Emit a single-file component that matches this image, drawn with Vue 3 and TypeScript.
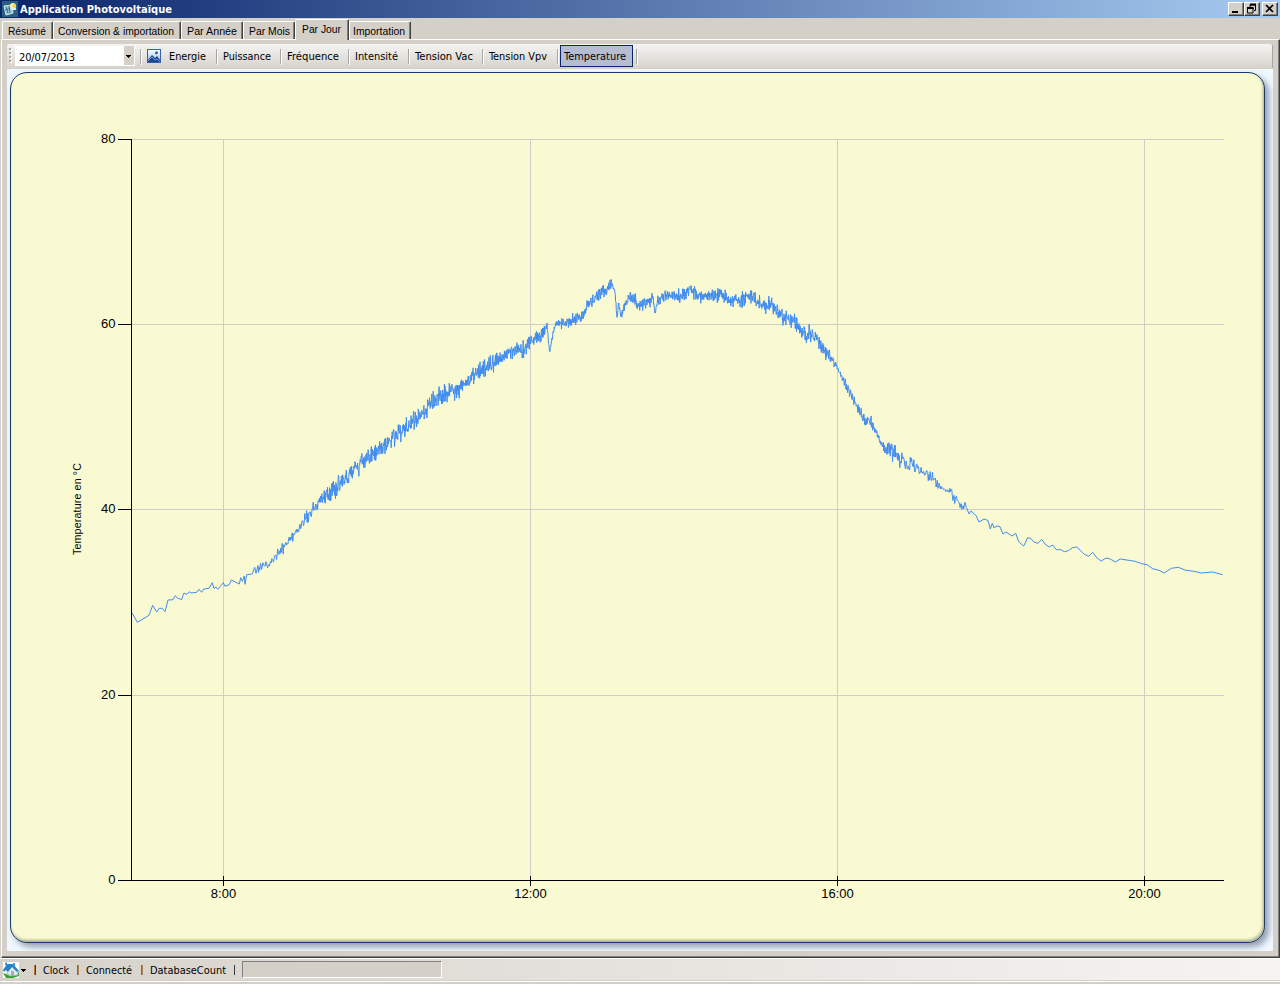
<script setup lang="ts">
interface Item { label: string; width: number; text: number; active?: boolean }

const tabs: Item[] = [
  { label: 'Résumé', width: 51, text: 38 },
  { label: 'Conversion & importation', width: 128, text: 116 },
  { label: 'Par Année', width: 62, text: 50 },
  { label: 'Par Mois', width: 52, text: 41 },
  { label: 'Par Jour', width: 54, text: 39, active: true },
  { label: 'Importation', width: 62, text: 52 },
]

const tools: Item[] = [
  { label: 'Energie', width: 76, text: 37 },
  { label: 'Puissance', width: 64, text: 48 },
  { label: 'Fréquence', width: 68, text: 52 },
  { label: 'Intensité', width: 60, text: 43 },
  { label: 'Tension Vac', width: 74, text: 58 },
  { label: 'Tension Vpv', width: 75, text: 58 },
  { label: 'Temperature', width: 79, text: 62, active: true },
]

const status: Item[] = [
  { label: 'Clock', width: 43, text: 26 },
  { label: 'Connecté', width: 64, text: 46 },
  { label: 'DatabaseCount', width: 93, text: 76 },
]

const yTicks = [880, 695, 509, 324, 139].map((y, i) => ({ label: String(i * 20), y: y + 0.5 }))
const xTicks = ['8:00', '12:00', '16:00', '20:00'].map((label, i) => ({ label, x: 223.5 + i * 307 }))

const morning = '132,612.7 137.3,622.3 149,615.3 152.7,605.3 156.7,612 159.3,608.3 162.3,608.3 165,611.7 168,600 173,599.7 175.3,595.7 177.3,598 181.7,599.7 183.7,593.3 187,594.3 189.3,591.7 191,593 196.7,592.3 199,589.3 201.7,592.3 203.7,589 209,588.3 212.3,582.7 214,588.3 216,587 217.7,589.3 220,586.7 223.3,582.7 225,586.3 229.3,584.7 231.3,580 239.3,584 240.7,577.7 242.4,581.5 244.3,576 245,584.3 246.7,574.7 252.3,574 254.7,567.3 256,573.3'
const evening = '969,514 971,511 976,515.5 979,522 984,519 988,520.5 990.3,529 992.3,523.3 994,528 997,526 1000,526.7 1003,534 1006,532 1012,536 1015.7,533.3 1018.7,541.7 1023.7,546 1027.7,537.7 1031,538.7 1034,542 1038,543.3 1041.7,539.3 1045,544 1049,547 1052.7,545 1056.3,549.7 1060.7,549.7 1064.3,551.7 1068.3,550.7 1072.3,547.7 1076.7,547 1084.3,554.3 1088.7,556.3 1092.7,552.3 1097.3,558.3 1101.3,561 1106,558 1110.3,559 1115.3,562 1120.3,559 1135,561.3 1141.7,563.7 1147,564.7 1152.7,568.7 1159,570.3 1164.3,573 1171.3,568.3 1178.3,567.3 1185.7,570.3 1193.7,571.3 1201.7,573 1212.3,572 1222.7,574.7'

// Daytime samples: x, mean, spread
const day: [number, number, number][] = [
  [258, 569, 4], [264, 565, 5], [270, 564, 2], [276, 556, 4], [282, 548, 5], [292, 537, 6], [300, 526, 5], [310, 513, 5],
  [317, 504, 5], [322, 497, 8], [330, 491, 9], [340, 484, 6], [351, 472, 6], [360, 464, 8], [367, 457, 6], [376, 454, 7],
  [385, 443, 8], [397, 435, 8], [405, 429, 7], [415, 420, 8], [420, 415, 7], [430, 405, 7], [437, 398, 8], [445, 394, 7],
  [452, 391, 8], [460, 389, 7], [467, 384, 5], [474, 374, 7], [482, 371, 8], [490, 365, 8], [500, 357, 7], [510, 353, 6],
  [519, 346, 6], [522, 350, 7], [530, 342, 5], [538, 336, 5], [543, 334, 6], [547, 326, 3], [549, 348, 3], [550, 350, 2],
  [553, 333, 3], [556, 324, 3], [565, 323, 4], [575, 320, 6], [582, 315, 6], [590, 304, 6], [597, 296, 5], [603, 294, 7],
  [608, 288, 5], [611, 284, 4], [614, 289, 3], [616, 302, 3], [617, 319, 3], [618.5, 303, 3], [621, 314, 4], [625, 305, 4],
  [630, 296, 4], [634, 300, 5], [638, 304, 5], [646, 304, 5], [653, 299, 5], [655, 314, 4], [657, 303, 4], [663, 297, 5],
  [670, 295, 6], [680, 296, 5], [690, 290, 6], [697, 295, 6], [710, 296, 6], [718, 295, 6], [727, 299, 7], [740, 300, 6],
  [755, 298, 6], [760, 304, 6], [775, 307, 7], [782, 317, 6], [793, 320, 6], [800, 329, 6], [808, 335, 8], [817, 339, 5],
  [825, 350, 6], [833, 360, 4], [838, 369, 2], [841, 376, 3], [847, 388, 5], [853, 399, 4], [860, 412, 4], [865, 421, 5],
  [871, 420, 6], [875, 431, 4], [881, 444, 4], [885, 448, 6], [893, 452, 7], [897, 455, 8], [905, 460, 6], [911, 464, 7],
  [918, 468, 5], [925, 474, 3], [930, 475, 6], [937, 483, 5], [942, 490, 2], [951, 492, 3], [954, 500, 6], [958, 502, 3],
  [962, 508, 4], [965, 503, 2], [967, 510, 1],
]

function buildCurve(): string {
  const points: string[] = [morning]
  let seed = 20072013
  const next = (): number => {
    seed = (Math.imul(seed, 1664525) + 1013904223) >>> 0
    return seed / 4294967296
  }
  let k = 0
  for (let x = 258; x < 967; x += x < 315 || x > 900 ? 0.6 : 0.33) {
    while (k < day.length - 2 && day[k + 1][0] <= x) k++
    const a = day[k]
    const b = day[k + 1]
    const t = (x - a[0]) / (b[0] - a[0])
    const mean = a[1] + (b[1] - a[1]) * t
    const spread = a[2] + (b[2] - a[2]) * t
    points.push(`${x.toFixed(1)},${(mean + (next() + next() + next() - 1.5) * spread * 1.2).toFixed(1)}`)
  }
  points.push(evening)
  return points.join(' ')
}
const curve = buildCurve()
</script>

<template>
  <div class="window">
    <header class="title">
      <svg class="app-icon" width="16" height="16" viewBox="0 0 16 16">
        <rect width="16" height="16" fill="#286083" />
        <path d="M2 5l8-1 1 8-7 2z" fill="#9ac3cf" stroke="#d0e5e9" />
        <path d="M4 6l2 6M7 5l1 7M3 9l7-2" stroke="#317795" fill="none" />
        <circle cx="11" cy="5" r="3" fill="#fff0a0" /><circle cx="12" cy="5" r="1.8" fill="#f5d43b" />
        <path d="M8 7q2-3 4 0h2v2H9z" fill="#d9edf5" />
      </svg>
      <svg class="title-text" width="160" height="18"><text x="1" y="13" textLength="152">Application Photovoltaïque</text></svg>
      <span class="spacer" />
      <button class="win"><svg width="14" height="12"><path d="M3 9.0h6" stroke="#000" stroke-width="2" /></svg></button>
      <button class="win"><svg width="14" height="12"><path d="M5 2h6M5 2v2.5M10.5 2v5.500H9M2 5.500h6.500M2.500 5v5h5.500V5" fill="none" stroke="#000" /><path d="M5 1.500h6M2 5h6.500" stroke="#000" stroke-width="2" /></svg></button>
      <button class="win close"><svg width="14" height="12"><path d="M3 2l7 7M10 2L3 9" stroke="#000" stroke-width="1.700" /></svg></button>
    </header>

    <nav class="tabs">
      <div v-for="t in tabs" :key="t.label" class="tab" :class="{ active: t.active }" :style="{ width: t.width + 'px' }">
        <svg :width="t.text + 4" height="16"><text x="0" y="12" :textLength="t.text" lengthAdjust="spacingAndGlyphs">{{ t.label }}</text></svg>
      </div>
    </nav>

    <main class="page">
      <div class="toolbar">
        <svg class="grip" width="4" height="20"><g v-for="i in 4" :key="i"><rect x="1" :y="i * 4 - 1" width="2" height="2" fill="#fff" /><rect x="0" :y="i * 4 - 2" width="2" height="2" fill="#aaa69e" /></g></svg>
        <div class="date">
          <svg width="64" height="20"><text x="0" y="15" textLength="56">20/07/2013</text></svg>
          <span class="drop"><svg width="9" height="20"><path d="M2 9h5v1H6v1H5v1H4v-1H3v-1H2z" /></svg></span>
        </div>
        <div v-for="(t, i) in tools" :key="t.label" class="tool" :class="{ active: t.active }" :style="{ width: t.width + 'px' }">
          <svg v-if="i === 0" class="picture" width="14" height="14" viewBox="0 0 14 14">
            <defs><linearGradient id="sky" x2="0" y2="1"><stop stop-color="#fff" /><stop offset="1" stop-color="#94bbec" /></linearGradient></defs>
            <rect x=".5" y=".5" width="13" height="13" fill="url(#sky)" stroke="#3560a9" />
            <path d="M1 11l4-5 3 3 2-2 3 4v2H1z" fill="#1d4491" /><path d="M1 12l4-4 3 3 2-1 3 3" fill="none" stroke="#6e98d6" />
            <circle cx="9.500" cy="3.800" r="1.500" fill="#2d60b0" />
          </svg>
          <span class="face"><svg :width="t.text + 3" height="20"><text x="0" y="14" :textLength="t.text" lengthAdjust="spacingAndGlyphs">{{ t.label }}</text></svg></span>
        </div>
        <div class="tool end" />
      </div>

      <section class="panel">
        <div class="chart">
          <svg class="plot" width="1253" height="869" viewBox="11 73 1253 869">
            <g stroke="#d0cdc8" shape-rendering="crispEdges">
              <path v-for="t in yTicks.slice(1)" :key="t.label" :d="`M132 ${t.y}H1224`" />
              <path v-for="t in xTicks" :key="t.label" :d="`M${t.x} 139V880`" />
            </g>
            <polyline :points="curve" fill="none" stroke="#418cf0" stroke-width="1" stroke-linejoin="bevel" />
            <g stroke="#000" shape-rendering="crispEdges">
              <path d="M131.500 139V881M131 880.500H1224" />
              <path v-for="t in yTicks" :key="t.label" :d="`M118 ${t.y}H131`" />
              <path v-for="t in xTicks" :key="t.label" :d="`M${t.x} 876V886`" />
            </g>
            <g class="axis">
              <text v-for="t in yTicks" :key="t.label" x="115.500" :y="t.y + 3.5" text-anchor="end">{{ t.label }}</text>
              <text v-for="t in xTicks" :key="t.label" :x="t.x" y="898" text-anchor="middle">{{ t.label }}</text>
            </g>
            <text class="caption" transform="translate(80.500 555) rotate(-90)" textLength="92">Temperature en °C</text>
          </svg>
        </div>
      </section>
    </main>

    <footer class="status">
      <svg class="home" width="24" height="16" viewBox="0 0 24 16">
        <rect width="16" height="16" fill="#fff" />
        <path d="M0 11q4 1 7 3l9-4v4l-6 2H3z" fill="#38a32c" />
        <path d="M4 7l6-3 5 5v4l-6 1-5-2z" fill="#e3e9ee" stroke="#9ca7ad" stroke-width=".7" />
        <path d="M0 8l4-6 6 0 6 7-2 1-5-5-4 5-2-2-2 2z" fill="#2a83c2" /><path d="M2 1l2-1v3H2zM10 1h2v3h-2z" fill="#3c99da" />
        <path d="M8 9h3v5H8z" fill="#a2afb7" />
        <path d="M18 7h5v1h-1v1h-1v1h-1V9h-1V8h-1z" />
      </svg>
      <div v-for="(s, i) in status" :key="s.label" class="cell" :class="{ cool: i > 0 }" :style="{ width: s.width + 'px' }">
        <i /><svg :width="s.text + 3" height="18"><text x="0" y="13" :textLength="s.text" lengthAdjust="spacingAndGlyphs">{{ s.label }}</text></svg>
      </div>
      <div class="cell last"><i /></div>
      <div class="progress" />
    </footer>
  </div>
</template>

<style>
body { margin: 0; background: #d4d0c8; overflow: hidden; }
</style>

<style scoped>
* { box-sizing: border-box; }
svg { display: block; flex: none; overflow: visible; }
.window { width: 1280px; height: 984px; display: flex; flex-direction: column; background: #d4d0c8; font: 11px "DejaVu Sans Condensed", "DejaVu Sans", sans-serif; }
.title { height: 18px; flex: none; display: flex; align-items: center; padding: 0 2px; background: linear-gradient(90deg, #0a246a, #a6caf0); }
.title-text { fill: #fff; font-weight: bold; }
.app-icon { margin-right: 1px; }
.spacer { flex: 1; }
.win { width: 16px; height: 14px; padding: 0; border: 1px solid; border-color: #fff #404040 #404040 #fff; background: #d4d0c8; box-shadow: inset -1px -1px #808080; }
.close { margin-left: 2px; }
.tabs { height: 21px; flex: none; display: flex; align-items: flex-end; padding-left: 2px; font-family: "Liberation Sans", Arial, sans-serif; }
.tab { height: 18px; display: flex; padding: 1px 0 0 5px; border-top: 1px solid #fff; border-left: 1px solid #fff; border-right: 1px solid #404040; border-radius: 2px 2px 0 0; box-shadow: inset -1px 0 #808080; }
.tab:nth-child(2) { padding-left: 4px; }
.tab:nth-child(6) { padding-left: 3px; }
.tab.active { height: 21px; background: #d4d0c8; margin-bottom: -1px; z-index: 1; padding-left: 6px; }
.page { height: 919px; flex: none; padding: 4px 5px 5px 5px; border: 1px solid; border-color: #fff #404040 #404040 #fff; box-shadow: inset -1px -1px #808080; margin-left: 1px; }
.toolbar { height: 25px; margin-right: 1px; display: flex; align-items: flex-start; background: linear-gradient(#f5f4f2, #d6d3cb); border-right: 1px solid #a9a69f; border-bottom: 1px solid #d4d0c8; border-radius: 2px; }
.grip { margin: 2px 2px 0; }
.date { width: 120px; height: 20px; margin: 2px 5px 0 0; padding-left: 4px; background: #fff; display: flex; justify-content: space-between; }
.drop { height: 20px; width: 11px; background: #d4d0c8; border: 1px solid #fff; border-width: 0 1px 1px 0; }
.tool { height: 24px; display: flex; align-items: center; padding-left: 7px; background: linear-gradient(#a6a6a6, #a6a6a6) 0 5px / 1px 15px no-repeat, linear-gradient(#fff, #fff) 1px 6px / 1px 15px no-repeat; }
.picture { margin-right: 8px; }
.tool.active { padding-left: 3px; }
.active > .face { width: 73px; height: 22px; padding: 0 0 0 3px; border: 1px solid #0a246a; background: #b6bdd2; }
.end { width: 5px; padding: 0; }
.panel { height: 882px; margin-right: 1px; padding: 3px 8px 8px 3px; background: #f0f8ff; overflow: hidden; }
.chart { width: 1255px; height: 871px; border: 1px solid #1a3b69; border-radius: 17px; background: #fafad2; box-shadow: 4px 4px 6px rgba(26, 35, 70, .42), inset -1px -2px 3px rgba(50, 55, 70, .4); overflow: hidden; }
.axis { font: 13px "Liberation Sans", Arial, sans-serif; }
.caption { font: 10.67px "Liberation Sans", Arial, sans-serif; }
.status { height: 26px; flex: none; display: flex; align-items: flex-start; padding-left: 3px; border-top: 1px solid #fff; background: linear-gradient(#d4d0c8, #d4d0c8) 0 23px / 100% 2px no-repeat, linear-gradient(#fff, #fff) 0 22px / 100% 1px no-repeat, linear-gradient(#d4d0c8, #d4d0c8) 0 21px / 100% 1px no-repeat, linear-gradient(90deg, #d6d2ca, #f5f4f2); }
.home { margin: 3px 7px 0 0; }
.cell { display: flex; padding-top: 2px; }
.cell i { width: 2px; height: 10px; margin: 4px 7px 0 0; background: linear-gradient(90deg, #bd7632 50%, #383c48 50%); }
.cell.cool i { background: linear-gradient(90deg, #3778ae 50%, #a98758 50%); }
.cell.last { width: 8px; }
.progress { width: 200px; height: 17px; margin-top: 2px; border: 1px solid; border-color: #808080 #fff #fff #808080; background: #d4d0c8; }
</style>
